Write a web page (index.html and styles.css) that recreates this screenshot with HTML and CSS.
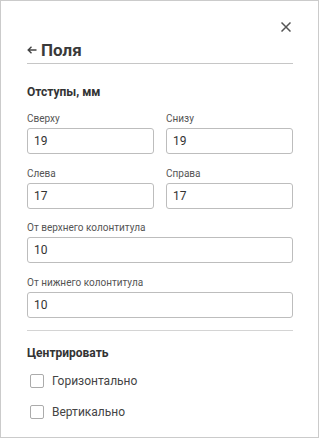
FILE: index.html
```html
<!DOCTYPE html>
<html>
<head>
    <title>Поля</title>
    <link rel="stylesheet" href="styles.css">
</head>
<body>
    <div class="panel">
        <div class="top-bar">
            <button class="close-btn" title="Закрыть">
                <svg width="10" height="10" viewBox="0 0 10 10">
                    <path d="M0.5 0.5 L9.5 9.5 M9.5 0.5 L0.5 9.5" stroke="#555" stroke-width="1.5" fill="none"/>
                </svg>
            </button>
        </div>

        <div class="title-row">
            <svg class="back-arrow" width="10" height="8" viewBox="0 0 10 8">
                <path d="M9.5 4 H1.5 M4.5 0.8 L1.2 4 L4.5 7.2" stroke="#444" stroke-width="1.4" fill="none"/>
            </svg>
            <h1>Поля</h1>
        </div>

        <h2>Отступы, мм</h2>
        <div class="field-grid">
            <div class="field">
                <label>Сверху</label>
                <input type="text" value="19">
            </div>
            <div class="field">
                <label>Снизу</label>
                <input type="text" value="19">
            </div>
            <div class="field">
                <label>Слева</label>
                <input type="text" value="17">
            </div>
            <div class="field">
                <label>Справа</label>
                <input type="text" value="17">
            </div>
            <div class="field wide">
                <label>От верхнего колонтитула</label>
                <input type="text" value="10">
            </div>
            <div class="field wide">
                <label>От нижнего колонтитула</label>
                <input type="text" value="10">
            </div>
        </div>

        <div class="separator"></div>

        <h2>Центрировать</h2>
        <div class="check-list">
            <label class="check-row"><span class="box"></span>Горизонтально</label>
            <label class="check-row"><span class="box"></span>Вертикально</label>
        </div>
    </div>
</body>
</html>
```

FILE: styles.css
```css
html, body {
    margin: 0;
    padding: 0;
    background-color: #fff;
}
body {
    font-family: Roboto, "Noto Sans", Arial, sans-serif;
    color: #333;
}
.panel {
    box-sizing: border-box;
    width: 319px;
    height: 438px;
    border: 1px solid #cbcbcb;
    padding: 16px 25px 0 26px;
}
.top-bar {
    display: flex;
    justify-content: flex-end;
    height: 20px;
}
.close-btn {
    width: 20px;
    height: 20px;
    margin-right: -3px;
    padding: 0;
    border: none;
    background: none;
    display: flex;
    align-items: center;
    justify-content: center;
    cursor: pointer;
}
.title-row {
    display: flex;
    align-items: center;
    margin-top: 3px;
    padding-bottom: 3px;
    border-bottom: 1px solid #c6c6c6;
}
.back-arrow {
    margin-right: 4px;
}
h1 {
    margin: 0;
    font-size: 17px;
    line-height: 20px;
    font-weight: bold;
    color: #3a3a3a;
}
h2 {
    margin: 20px 0 0 0;
    font-size: 12px;
    line-height: 16px;
    font-weight: bold;
    color: #333;
}
.field-grid {
    display: grid;
    grid-template-columns: 1fr 1fr;
    column-gap: 12px;
    row-gap: 12.6px;
    margin-top: 12px;
}
.field {
    display: flex;
    flex-direction: column;
}
.field.wide {
    grid-column: 1 / 3;
}
.field label {
    font-size: 10px;
    line-height: 14px;
    color: #555;
    margin-bottom: 2px;
}
.field input {
    box-sizing: border-box;
    width: 100%;
    height: 26px;
    border: 1px solid #bdbdbd;
    border-radius: 3px;
    padding: 0 6px;
    font-family: inherit;
    font-size: 12px;
    color: #333;
    outline: none;
}
.separator {
    height: 1px;
    background-color: #d4d4d4;
    margin-top: 12px;
}
.separator + h2 {
    margin-top: 14px;
}
.check-list {
    display: flex;
    flex-direction: column;
    gap: 11px;
    margin-top: 10px;
}
.check-row {
    display: flex;
    align-items: center;
    height: 20px;
    font-size: 12px;
    color: #444;
}
.box {
    box-sizing: border-box;
    width: 14px;
    height: 14px;
    border: 1.5px solid #ababab;
    border-radius: 2px;
    margin-left: 3px;
    margin-right: 8px;
}
```
